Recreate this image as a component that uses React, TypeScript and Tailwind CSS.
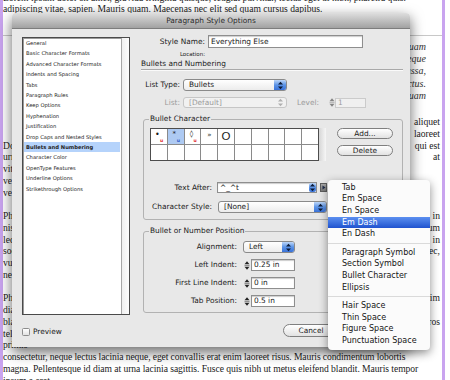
import React from "react";

const ui = "font-['DejaVu_Sans',sans-serif]";

const panels = [
  "General",
  "Basic Character Formats",
  "Advanced Character Formats",
  "Indents and Spacing",
  "Tabs",
  "Paragraph Rules",
  "Keep Options",
  "Hyphenation",
  "Justification",
  "Drop Caps and Nested Styles",
  "Bullets and Numbering",
  "Character Color",
  "OpenType Features",
  "Underline Options",
  "Strikethrough Options",
];

const menu: (string | null)[] = [
  "Tab",
  "Em Space",
  "En Space",
  "Em Dash",
  "En Dash",
  null,
  "Paragraph Symbol",
  "Section Symbol",
  "Bullet Character",
  "Ellipsis",
  null,
  "Hair Space",
  "Thin Space",
  "Figure Space",
  "Punctuation Space",
];

// left word, right word for the page lines below the pull quote
const lower: [string, string][] = [
  ["", "aliquet"],
  ["", "laoreet"],
  ["Donec", "qui est"],
  ["urna", "at"],
  ["vitae", ""],
  ["vero", ""],
  ["velit", ""],
  ["", ""],
  ["Phasellus", "in"],
  ["nisi", "dictum"],
  ["lectus", "in"],
  ["sociis", "donec,"],
  ["vulputate", ""],
  ["nec", ""],
  ["", ""],
  ["Phasellus", "enim"],
  ["diam", ""],
  ["blandit", "eros"],
  ["tellus", ""],
  ["primis", ""],
];

function UpDown({ color }: { color: string }) {
  return (
    <svg width="7" height="9" viewBox="0 0 7 9">
      <path d="M3.5 0.8 L6 3.6 H1 Z" fill={color} />
      <path d="M3.5 8.2 L6 5.4 H1 Z" fill={color} />
    </svg>
  );
}

function Stepper() {
  return (
    <svg width="6" height="11" viewBox="0 0 6 11">
      <path d="M3 1.2 L5.5 4.2 H0.5 Z" fill="#222" />
      <path d="M0.5 5.5 H5.5" stroke="#777" strokeWidth="0.8" />
      <path d="M3 9.8 L5.5 6.8 H0.5 Z" fill="#222" />
    </svg>
  );
}

function Popup({ text, className }: { text: string; className: string }) {
  return (
    <div
      className={`flex items-stretch rounded-[3px] border border-[#8a8a8a] bg-linear-to-b from-white to-[#ececec] ${className}`}
    >
      <span className="flex flex-1 items-center pl-[5px]">{text}</span>
      <span className="flex w-[12px] items-center justify-center rounded-r-[2px] bg-linear-to-b from-[#bcd6f8] via-[#5b93e6] to-[#3a72d8]">
        <UpDown color="#0c1a36" />
      </span>
    </div>
  );
}

function Field({ value }: { value: string }) {
  return (
    <div className="flex h-[12px] items-center">
      <Stepper />
      <div className="ml-[1px] flex h-[12px] w-[44px] items-center border border-[#8e8e8e] bg-white pl-[2px] shadow-[inset_0_1px_1px_rgba(0,0,0,0.2)]">
        {value}
      </div>
    </div>
  );
}

function Pill({ text, className }: { text: string; className: string }) {
  return (
    <div
      className={`flex items-center justify-center rounded-full border border-[#7f7f7f] bg-linear-to-b from-white to-[#e2e2e2] ${className}`}
    >
      {text}
    </div>
  );
}

function Label({ text, className }: { text: string; className: string }) {
  return <span className={`flex shrink-0 justify-end whitespace-nowrap ${className}`}>{text}</span>;
}

function Cell({ children, mark, selected }: { children?: React.ReactNode; mark?: string; selected?: boolean }) {
  return (
    <div
      className={`relative flex h-[15px] items-start justify-center pt-[1px] ${selected ? "bg-[#aecaf2]" : "bg-white"}`}
    >
      {children}
      {mark && (
        <span
          className={`absolute bottom-[1px] left-[9px] text-[4.5px] leading-[4px] font-bold ${mark === "blue" ? "text-[#2c58c8]" : "text-[#e0262a]"}`}
        >
          u
        </span>
      )}
    </div>
  );
}

function Dialog() {
  return (
    <div
      className={`absolute left-[12px] top-[13px] w-[398px] rounded-t-[4px] ${ui} text-[7.4px] text-[#1b1b1b] shadow-[0_5px_14px_rgba(0,0,0,0.6)]`}
    >
      <div className="flex h-[16px] items-center justify-center rounded-t-[4px] border-b border-[#7d7d7d] bg-linear-to-b from-[#dedede] to-[#a2a2a2] text-[7.4px] text-[#2a2a2a]">
        Paragraph Style Options
      </div>
      <div className="flex h-[318px] bg-[#e8e8e8]">
        {/* panel list */}
        <div className="flex w-[128px] flex-col pl-[10px] pt-[8px]">
          <div className="flex h-[278px] w-[108px] border border-[#4a4a4a] bg-white shadow-[inset_1px_1px_0_#9a9a9a]">
            <div className="flex-1 px-[1px] text-[5.2px] leading-[10.4px] text-[#222]">
              {panels.map((p) => (
                <div
                  key={p}
                  className={`whitespace-nowrap px-[2px] ${p === "Bullets and Numbering" ? "bg-[#b5d3fb] font-bold" : ""}`}
                >
                  {p}
                </div>
              ))}
            </div>
            <div className="w-[8px] border-l border-[#a6a6a6] bg-linear-to-r from-[#efefef] to-[#fcfcfc]" />
          </div>
          <div className="mt-[12px] flex h-[9px] items-center gap-[3px]">
            <span className="h-[8px] w-[8px] rounded-[1.5px] border border-[#8d8d8d] bg-linear-to-b from-white to-[#e2e2e2]" />
            <span>Preview</span>
          </div>
        </div>

        {/* settings */}
        <div className="flex w-[263px] flex-col">
          <div className="mt-[6px] flex h-[13px] items-center">
            <Label text="Style Name:" className="w-[65px]" />
            <div className="ml-[3px] flex h-[13px] w-[155px] items-center border border-[#8e8e8e] bg-white pl-[2px] shadow-[inset_0_1px_1px_rgba(0,0,0,0.2)]">
              Everything Else
            </div>
          </div>
          <div className="mt-[3px] flex h-[6px]">
            <span className="w-[65px] text-right text-[5.5px] leading-[6px]">Location:</span>
          </div>
          <div className="mt-[2px] ml-[1px] h-[11px] w-[262px] border-b border-[#a9a9a9] leading-[9px] shadow-[0_1px_0_#fafafa]">
            Bullets and Numbering
          </div>

          <div className="mt-[9px] flex h-[12px] items-center">
            <Label text="List Type:" className="w-[40px]" />
            <Popup text="Bullets" className="ml-[3px] h-[12px] w-[104px]" />
          </div>
          <div className="mt-[6px] flex h-[11px] items-center text-[#9b9b9b]">
            <Label text="List:" className="w-[40px]" />
            <div className="ml-[3px] flex h-[11px] w-[104px] items-stretch rounded-[3px] border border-[#c6c6c6] bg-[#f1f1f1]">
              <span className="flex flex-1 items-center pl-[5px]">[Default]</span>
              <span className="flex w-[12px] items-center justify-center">
                <UpDown color="#b0b0b0" />
              </span>
            </div>
            <span className="ml-[10px]">Level:</span>
            <span className="ml-[10px] flex items-center opacity-50">
              <Stepper />
            </span>
            <div className="flex h-[10px] w-[31px] items-center border border-[#cbcbcb] bg-[#f0f0f0] pl-[2px]">1</div>
          </div>

          <fieldset className="mt-[6px] ml-[3px] w-[260px] rounded-[3px] border border-[#b2b2b2] px-[6px] pb-[6px]">
            <legend className="-ml-[1px] px-[1px] leading-[10px]">Bullet Character</legend>
            <div className="mt-[4px] flex items-start">
              <div className="grid grid-cols-[repeat(10,15.8px)] gap-px border border-[#4d4d4d] bg-[#8a8a8a]">
                <Cell mark="red">
                  <span className="-ml-[3px] text-[8px] leading-[9px]">•</span>
                </Cell>
                <Cell mark="blue" selected>
                  <span className="-ml-[3px] text-[7px] leading-[9px]">*</span>
                </Cell>
                <Cell mark="red">
                  <span className="-ml-[2px] text-[7px] leading-[9px]">◊</span>
                </Cell>
                <Cell>
                  <span className="text-[7px] leading-[11px]">»</span>
                </Cell>
                <Cell>
                  <span className="font-['Liberation_Sans',sans-serif] text-[11.5px] leading-[12px]">O</span>
                </Cell>
                {Array.from({ length: 15 }).map((_, i) => (
                  <Cell key={i} />
                ))}
              </div>
              <div className="h-[33px] w-[7px] bg-linear-to-r from-[#d6d6d6] to-[#f6f6f6]" />
              <div className="ml-[11px] flex flex-col gap-[6px]">
                <Pill text="Add..." className="h-[11px] w-[56px]" />
                <Pill text="Delete" className="h-[11px] w-[56px]" />
              </div>
            </div>
            <div className="mt-[21px] flex h-[11px] items-center">
              <Label text="Text After:" className="w-[62px]" />
              <div className="ml-[5px] flex h-[11px] w-[100px] items-stretch border border-[#8e8e8e] bg-white shadow-[inset_0_1px_1px_rgba(0,0,0,0.2)]">
                <span className="flex flex-1 items-center pl-[2px]">^_^t</span>
                <span className="flex w-[7px] items-center justify-center rounded-[2px] bg-linear-to-b from-[#bcd6f8] via-[#5b93e6] to-[#3a72d8]">
                  <UpDown color="#0c1a36" />
                </span>
              </div>
              <div className="ml-[3px] flex h-[9px] w-[7px] items-center justify-center border border-[#5e5e5e] bg-linear-to-b from-[#a9a9a9] to-[#7b7b7b]">
                <svg width="4" height="5" viewBox="0 0 4 5">
                  <path d="M0.5 0.5 L3.5 2.5 L0.5 4.5 Z" fill="#1f2b4a" />
                </svg>
              </div>
            </div>
            <div className="mt-[8px] flex h-[12px] items-center">
              <Label text="Character Style:" className="w-[62px]" />
              <Popup text="[None]" className="ml-[6px] h-[12px] w-[109px]" />
            </div>
          </fieldset>

          <fieldset className="mt-[6px] ml-[3px] w-[260px] rounded-[3px] border border-[#b2b2b2] px-[6px] pb-[5px]">
            <legend className="-ml-[1px] px-[1px] leading-[10px]">Bullet or Number Position</legend>
            <div className="mt-[5px] flex h-[12px] items-center">
              <Label text="Alignment:" className="w-[87px]" />
              <Popup text="Left" className="ml-[6px] h-[12px] w-[52px]" />
            </div>
            <div className="mt-[6px] flex h-[12px] items-center">
              <Label text="Left Indent:" className="w-[87px]" />
              <span className="ml-[7px]">
                <Field value="0.25 in" />
              </span>
            </div>
            <div className="mt-[6px] flex h-[12px] items-center">
              <Label text="First Line Indent:" className="w-[87px]" />
              <span className="ml-[7px]">
                <Field value="0 in" />
              </span>
            </div>
            <div className="mt-[6px] flex h-[12px] items-center">
              <Label text="Tab Position:" className="w-[87px]" />
              <span className="ml-[7px]">
                <Field value="0.5 in" />
              </span>
            </div>
          </fieldset>

          <div className="mt-[11px] flex justify-end pr-[64px]">
            <Pill text="Cancel" className="h-[13px] w-[56px]" />
          </div>
        </div>
      </div>
    </div>
  );
}

function SpecialMenu() {
  return (
    <div
      className={`absolute left-[328px] top-[180px] w-[102px] rounded-[4px] bg-[#fbfbfb] pt-[2px] pb-[3px] ${ui} text-[8px] text-[#151515] shadow-[0_3px_10px_rgba(0,0,0,0.45)]`}
    >
      {menu.map((m, i) =>
        m === null ? (
          <div key={i} className="flex h-[7px] items-center">
            <div className="h-px w-full bg-[#dadada]" />
          </div>
        ) : (
          <div
            key={i}
            className={`flex h-[11.6px] items-center pl-[14px] ${m === "Em Dash" ? "bg-linear-to-b from-[#5c8ff0] to-[#1f52cf] text-white" : ""}`}
          >
            {m}
          </div>
        ),
      )}
    </div>
  );
}

export default function App() {
  return (
    <div className="relative h-[380px] w-[450px] overflow-hidden bg-white">
      <div className="h-[380px] w-[445px] border-x-[3px] border-[#c9a4ef]">
        <div className="h-[380px] overflow-hidden font-['Liberation_Serif',serif] text-[9.6px] leading-[11.75px] text-[#1a1a1a]">
          <div className="mt-[-8.5px] whitespace-nowrap">
            <div>Lorem ipsum dolor sit amet, gravida fringilla quisque, feugiat pulvinar, lectus eget ut nibh, pharetra quis.</div>
            <div>adipiscing vitae, sapien. Mauris quam. Maecenas nec elit sed quam cursus dapibus.</div>
          </div>
          <div className="mt-[20px] h-px bg-[#c8c8c8]" />
          <div className="mt-[5px] flex flex-col items-end pr-[16px] text-[10px] italic leading-[12.2px] text-[#333]">
            <div>quam</div>
            <div>neque</div>
            <div>massa,</div>
            <div>luctus.</div>
            <div>quam</div>
          </div>
          <div className="mt-[14px] whitespace-nowrap">
            {lower.map(([l, r], i) => (
              <div key={i} className="flex h-[11.75px] justify-between pr-[2px]">
                <span>{l}</span>
                <span>{r}</span>
              </div>
            ))}
            <div className="tracking-[-0.1px]">
              consectetur, neque lectus lacinia neque, eget convallis erat enim laoreet risus. Mauris condimentum lobortis
            </div>
            <div className="tracking-[-0.05px]">
              magna. Pellentesque id diam at urna lacinia sagittis. Fusce quis nibh ut metus eleifend blandit. Mauris tempor
            </div>
            <div>ipsum a erat.</div>
          </div>
        </div>
      </div>
      <Dialog />
      <SpecialMenu />
    </div>
  );
}
